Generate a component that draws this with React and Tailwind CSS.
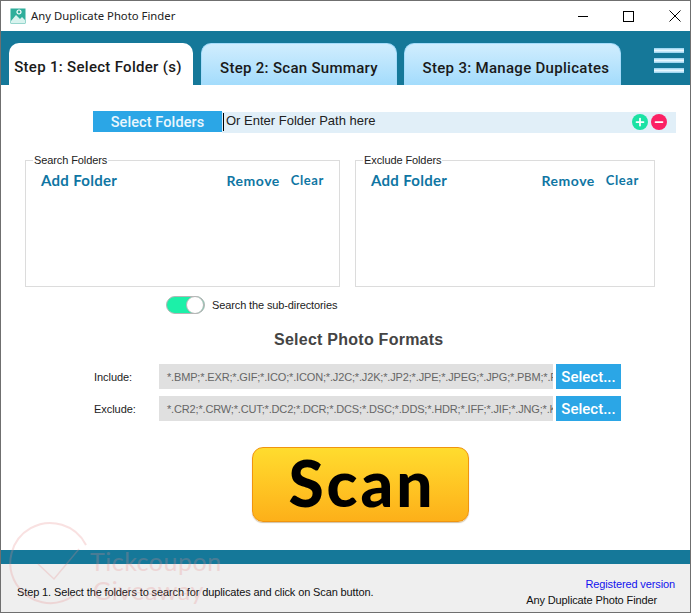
import { Plus, Minus } from 'lucide-react'

const tabFont = "font-['Roboto',sans-serif]"
const arial = "font-['Liberation_Sans',sans-serif]"
const uiFont = "font-['Noto_Sans',sans-serif]"
const linkFont = "font-['Lato',sans-serif]"

function AppIcon() {
  return (
    <svg width="16" height="16" viewBox="0 0 16 16" className="shrink-0">
      <rect x="0.5" y="0.5" width="15" height="15" fill="#2fae9b" />
      <path d="M1 13 L6 7 L10 11 L12 9 L15 12 L15 15 L1 15 Z" fill="#d8f3ee" />
      <circle cx="9" cy="4" r="2" fill="none" stroke="#fff" strokeWidth="1.2" />
    </svg>
  )
}

function WindowControls() {
  return (
    <div className="ml-auto mr-[9px] flex items-center gap-[35px]">
      <svg width="10" height="11" viewBox="0 0 10 11"><path d="M0 5.5 H10" stroke="#000" strokeWidth="1" /></svg>
      <svg width="11" height="11" viewBox="0 0 11 11"><rect x="0.5" y="0.5" width="10" height="10" fill="none" stroke="#000" strokeWidth="1" /></svg>
      <svg width="12" height="12" viewBox="0 0 12 12"><path d="M0.5 0.5 L11.5 11.5 M11.5 0.5 L0.5 11.5" stroke="#000" strokeWidth="1" /></svg>
    </div>
  )
}

function Tab({ label, active, className }) {
  const look = active
    ? 'bg-white'
    : 'border border-b-0 border-[#a5dcfb] bg-gradient-to-b from-[#d0edfe] to-[#a3dcfc]'
  return (
    <div className={`h-[42px] flex items-center justify-center pt-[7px] rounded-t-[10px] ${look} ${className}`}>
      <span className={`${tabFont} text-[15px] font-medium text-[#1a1a1a] tracking-[0.3px]`}>{label}</span>
    </div>
  )
}

function FolderBox({ title, className }) {
  return (
    <div className={`relative h-[127px] border border-[#dcdcdc] ${className}`}>
      <span className={`absolute -top-[8px] left-[7px] bg-white px-[1px] ${arial} text-[11px] leading-[15px] tracking-[-0.1px] text-[#222]`}>{title}</span>
      <div className={`flex items-center pt-[8px] pl-[15px] pr-[15px] ${linkFont} text-[#0f76a3]`}>
        <span className="text-[15px] font-bold tracking-[0.3px]">Add Folder</span>
        <span className="ml-auto mr-[11px] text-[14px] font-bold tracking-[0.5px]">Remove</span>
        <span className="pt-[1px] text-[13px] font-bold tracking-[0.6px]">Clear</span>
      </div>
    </div>
  )
}

function FormatRow({ label, value }) {
  return (
    <div className="flex items-center h-[25px]">
      <span className={`w-[65px] pt-[2px] ${arial} text-[11px] tracking-[-0.05px] text-[#222]`}>{label}</span>
      <div className={`w-[394px] h-full flex items-center pl-[8px] pt-[1px] bg-[#e0e0e0] overflow-hidden whitespace-nowrap ${arial} text-[11px] tracking-[-0.16px] text-[#666]`}>{value}</div>
      <div className={`ml-[3px] w-[65px] h-full flex items-center justify-center pt-[2px] bg-[#2ba6e6] ${tabFont} text-[15px] font-medium text-white`}>Select...</div>
    </div>
  )
}

export default function App() {
  return (
    <div className="relative w-[691px] h-[613px] flex flex-col overflow-hidden border border-[#6f6f6f] bg-white">
      {/* title bar */}
      <div className="h-[30px] shrink-0 flex items-center pl-[9px] bg-white">
        <AppIcon />
        <span className={`ml-[5px] ${uiFont} text-[11.3px] text-[#222]`}>Any Duplicate Photo Finder</span>
        <WindowControls />
      </div>

      {/* tabs */}
      <div className="h-[54px] shrink-0 flex items-end pl-[8px] bg-[#157899]">
        <Tab label="Step 1: Select Folder (s)" active className="w-[184px] pr-[6px]" />
        <Tab label="Step 2: Scan Summary" className="ml-[8px] w-[196px]" />
        <Tab label="Step 3: Manage Duplicates" className="ml-[7px] w-[217px] pl-[7px]" />
        <div className="ml-[33px] mb-[12px] w-[30px] flex flex-col gap-[5px]">
          <div className="h-[5px] bg-gradient-to-b from-[#8fd0ee] via-[#e8f7ff] to-[#8fd0ee]" />
          <div className="h-[5px] bg-gradient-to-b from-[#8fd0ee] via-[#e8f7ff] to-[#8fd0ee]" />
          <div className="h-[5px] bg-gradient-to-b from-[#8fd0ee] via-[#e8f7ff] to-[#8fd0ee]" />
        </div>
      </div>

      {/* main panel */}
      <div className="flex-1 flex flex-col bg-white">
        <div className="mt-[26px] ml-[92px] flex items-start">
          <div className={`w-[129px] h-[21px] flex items-center justify-center pt-[2px] bg-[#2ba6e6] ${tabFont} text-[14.5px] font-medium tracking-[0.1px] text-[#e9f6fd]`}>Select Folders</div>
          <div className="mt-[1px] w-[454px] h-[21px] flex items-center bg-[#e1eff8]">
            <span className="ml-[1px] w-[1px] h-[18px] -mt-[2px] bg-black" />
            <span className={`ml-[2px] -mt-[3px] ${arial} text-[13px] text-[#222]`}>Or Enter Folder Path here</span>
            <div className="ml-auto mr-[9px] -mt-[1px] flex items-center gap-[3px]">
              <div className="w-[16px] h-[16px] rounded-full flex items-center justify-center bg-[#1be2a4]"><Plus size={12} strokeWidth={3.5} color="#fff" /></div>
              <div className="w-[16px] h-[16px] rounded-full flex items-center justify-center bg-[#fb2164]"><Minus size={12} strokeWidth={3.5} color="#fff" /></div>
            </div>
          </div>
        </div>

        <div className="mt-[27px] ml-[24px] flex gap-[15px]">
          <FolderBox title="Search Folders" className="w-[315px]" />
          <FolderBox title="Exclude Folders" className="w-[300px]" />
        </div>

        <div className="mt-[9px] ml-[165px] flex items-center">
          <div className="w-[39px] h-[18px] flex items-center justify-end rounded-full border border-[#b5b5b5] bg-[#1cf0a8]">
            <div className="w-[18px] h-[18px] rounded-full border border-[#b5b5b5] bg-white" />
          </div>
          <span className={`ml-[7px] pt-[1px] ${arial} text-[11px] tracking-[-0.12px] text-[#222]`}>Search the sub-directories</span>
        </div>

        <div className={`mt-[15px] ml-[273px] ${arial} text-[16px] leading-[22px] font-bold text-[#444] tracking-[0.25px]`}>Select Photo Formats</div>

        <div className="mt-[13px] ml-[93px] flex flex-col gap-[7px]">
          <FormatRow label="Include:" value="*.BMP;*.EXR;*.GIF;*.ICO;*.ICON;*.J2C;*.J2K;*.JP2;*.JPE;*.JPEG;*.JPG;*.PBM;*.PCD;*.PGM" />
          <FormatRow label="Exclude:" value="*.CR2;*.CRW;*.CUT;*.DC2;*.DCR;*.DCS;*.DSC;*.DDS;*.HDR;*.IFF;*.JIF;*.JNG;*.KDC" />
        </div>

        <div className="mt-[26px] ml-[251px] w-[217px] h-[75px] flex items-center justify-center pl-[3px] pb-[3px] rounded-[11px] border border-[#f0940f] bg-gradient-to-b from-[#ffdc2e] to-[#fdb019] shadow-[0_1px_1px_rgba(120,80,0,0.35)]">
          <span className={`${linkFont} text-[64px] leading-none font-black text-black tracking-[3px]`}>Scan</span>
        </div>
      </div>

      {/* status */}
      <div className="h-[14px] shrink-0 bg-[#157899]" />
      <div className={`h-[48px] shrink-0 flex bg-[#efefef] ${arial} text-[11px] tracking-[-0.12px] text-[#111]`}>
        <span className="ml-[16px] mt-[20px] leading-[17px]">Step 1. Select the folders to search for duplicates and click on Scan button.</span>
        <div className="ml-auto mr-[15px] mt-[12px] flex flex-col items-end leading-[16px]">
          <span className="text-[#1212ee]">Registered version</span>
          <span className="mr-[18px]">Any Duplicate Photo Finder</span>
        </div>
      </div>

      {/* watermark over the page */}
      <div className="absolute left-[8px] top-[520px] w-[230px] h-[90px] pointer-events-none opacity-25 text-[#e88a8a]">
        <svg width="90" height="90" viewBox="0 0 90 90" className="absolute left-0 top-0">
          <path d="M77 24 A40 40 0 1 0 64 75" fill="none" stroke="currentColor" strokeWidth="2" />
          <path d="M29 43 L45 58 L70 28" fill="none" stroke="currentColor" strokeWidth="1.5" />
        </svg>
        <div className={`absolute left-[81px] top-[25px] ${linkFont} text-[25px] leading-[30px] tracking-[0.5px]`}>Tickcoupon</div>
        <div className={`absolute left-[84px] top-[54px] ${linkFont} text-[25px] leading-[30px] tracking-[0.5px]`}>Giveaway</div>
      </div>
    </div>
  )
}
